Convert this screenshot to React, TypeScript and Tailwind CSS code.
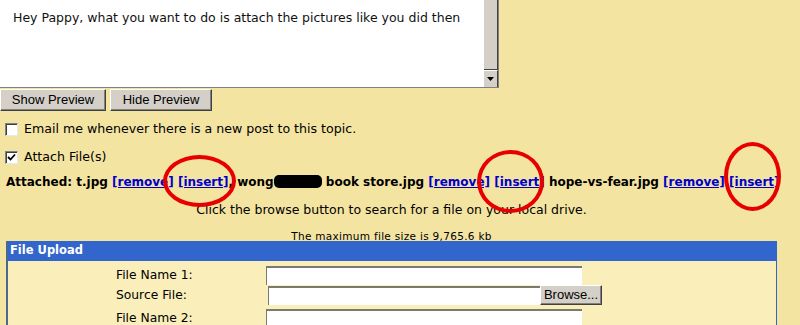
import React from 'react';

// Old-school forum reply form: attachments + file upload panel.

const RED_RINGS = [
  { left: 163, top: 155, w: 73, h: 52 },
  { left: 477, top: 150, w: 67, h: 63 },
  { left: 724, top: 142, w: 57, h: 69 },
];

function Checkbox({ checked }: { checked?: boolean }) {
  return (
    <span className="inline-flex h-[13px] w-[13px] items-center justify-center border border-t-[#808080] border-l-[#808080] border-r-[#e8e8e8] border-b-[#e8e8e8] bg-white shadow-[inset_1px_1px_0_#404040]">
      {checked && (
        <svg width="9" height="9" viewBox="0 0 9 9">
          <path d="M1 4 L3.5 6.5 L8 1.5" fill="none" stroke="black" strokeWidth="1.8" />
        </svg>
      )}
    </span>
  );
}

function XpButton({ children, className = '' }: { children: React.ReactNode; className?: string }) {
  return (
    <span
      className={`inline-flex items-center justify-center bg-[#d4d0c8] border border-t-white border-l-white border-r-[#404040] border-b-[#404040] shadow-[inset_-1px_-1px_0_#808080] font-['Liberation_Sans',sans-serif] text-[13px] text-black ${className}`}
    >
      {children}
    </span>
  );
}

function TextInput({ className = '' }: { className?: string }) {
  return <span className={`block h-[19px] bg-white border-t-2 border-l border-[#7a7a6e] ${className}`} />;
}

function Link({ children }: { children: React.ReactNode }) {
  return <span className="text-[#0000cc] underline">{children}</span>;
}

export default function App() {
  return (
    <div className="relative h-[325px] w-[800px] overflow-hidden bg-[#f4e4a2] font-['DejaVu_Sans',sans-serif] text-black">
      {/* Message textarea */}
      <div className="flex h-[88px] w-[499px] border-r border-b border-[#808080] bg-white">
        <div className="flex-1 px-[13px] pt-[10px] text-[12.5px] leading-[15px] text-[#111] whitespace-nowrap">
          Hey Pappy, what you want to do is attach the pictures like you did then
        </div>
        <div className="flex w-[14px] flex-col bg-[#d4d0c8]">
          <div className="flex-1 border-r border-b border-[#404040]" />
          <div className="flex h-[17px] items-center justify-center border-r border-[#404040] border-t border-t-white">
            <svg width="7" height="4" viewBox="0 0 7 4">
              <path d="M0 0 H7 L3.5 4 Z" fill="black" />
            </svg>
          </div>
        </div>
      </div>

      <div className="flex gap-[4px] pt-[1px]">
        <XpButton className="h-[22px] w-[106px]">Show Preview</XpButton>
        <XpButton className="h-[22px] w-[102px]">Hide Preview</XpButton>
      </div>

      {/* Options */}
      <div className="mt-[11px] flex h-[14px] items-center gap-[6px] pl-[5px] text-[12.6px]">
        <Checkbox />
        <span>Email me whenever there is a new post to this topic.</span>
      </div>
      <div className="mt-[14px] flex h-[14px] items-center gap-[6px] pl-[5px] text-[12.6px]">
        <Checkbox checked />
        <span>Attach File(s)</span>
      </div>

      <div className="ml-[6px] mt-[11px] h-[14px] w-[771px] whitespace-nowrap text-[12px] font-bold leading-[14px]">
        Attached: t.jpg <Link>[remove]</Link> <Link>[insert]</Link>, wong
        <span className="inline-block h-[13px] w-[48px] rounded-[5px] bg-black align-[-2px]" /> book store.jpg{' '}
        <Link>[remove]</Link> <Link>[insert]</Link> hope-vs-fear.jpg <Link>[remove]</Link> <Link>[insert]</Link>
      </div>

      <div className="ml-[6px] w-[771px]">
        <div className="mt-[14px] text-center text-[12.5px] leading-[14px]">
          Click the browse button to search for a file on your local drive.
        </div>
        <div className="mt-[14px] h-[10px] text-center text-[10.5px] leading-[10px] tracking-[0.3px]">
          The maximum file size is 9,765.6 kb
        </div>

        {/* File upload panel */}
        <div className="border-l-2 border-r border-[#3366cc] border-l-[#4a6a8c]">
          <div className="flex h-[20px] items-center bg-[#3366cc] pl-[2px] text-[11.5px] font-bold text-white">
            File Upload
          </div>
          <div className="bg-[#faefbb] pt-[4px] text-[12.3px]">
            <div className="flex h-[20px] items-center">
              <span className="w-[258px] pl-[108px]">File Name 1:</span>
              <TextInput className="w-[316px]" />
            </div>
            <div className="flex h-[20px] items-center">
              <span className="w-[260px] pl-[108px]">Source File:</span>
              <TextInput className="w-[272px]" />
              <XpButton className="h-[20px] w-[62px] text-[12px]">Browse...</XpButton>
            </div>
            <div className="mt-[3px] flex h-[20px] items-center">
              <span className="w-[258px] pl-[108px]">File Name 2:</span>
              <TextInput className="w-[316px]" />
            </div>
          </div>
        </div>
      </div>

      {/* Red annotation rings drawn over the screenshot */}
      {RED_RINGS.map((r, i) => (
        <span
          key={i}
          className="pointer-events-none absolute rounded-[50%] border-[4px] border-[#e60000]"
          style={{ left: r.left, top: r.top, width: r.w, height: r.h }}
        />
      ))}
    </div>
  );
}
